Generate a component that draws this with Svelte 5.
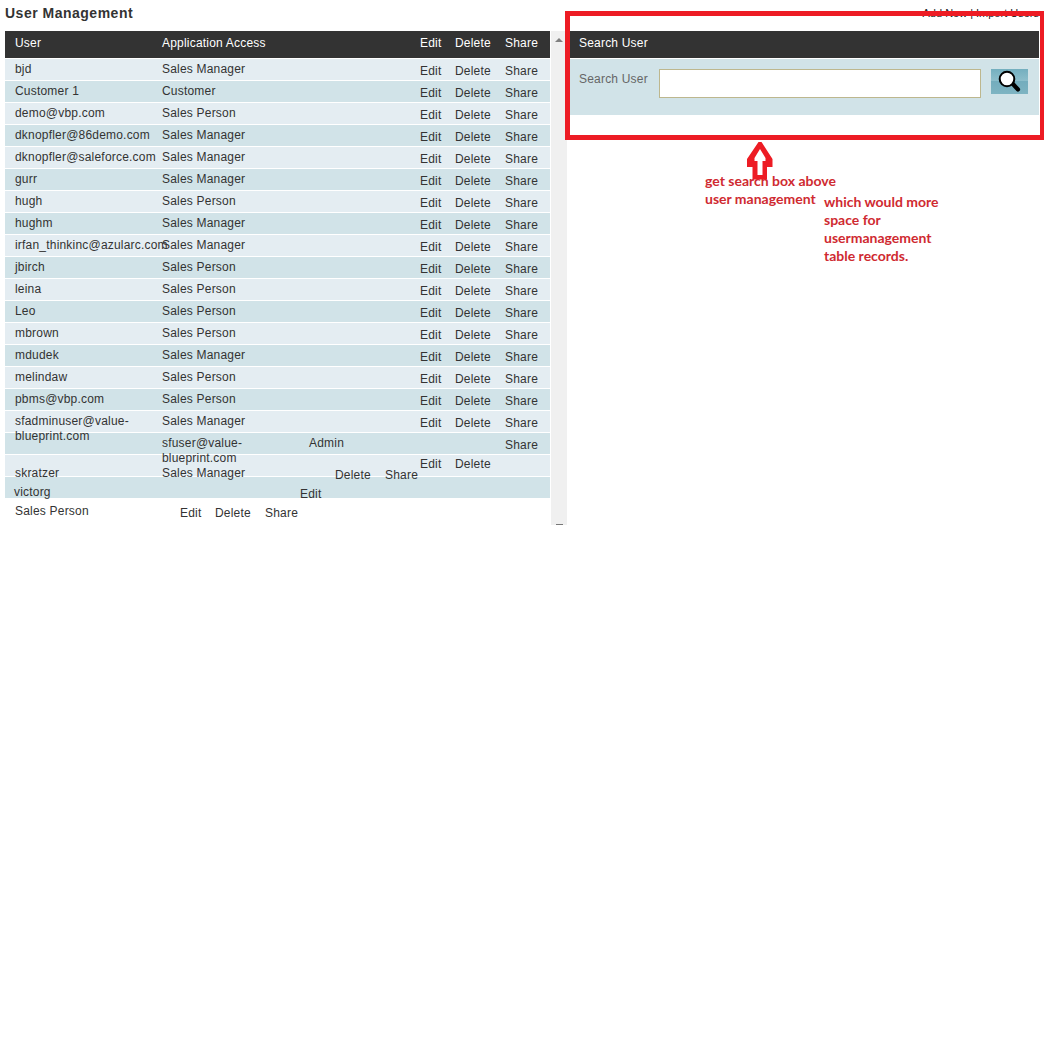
<script>
  const rows = [
    ['bjd', 'Sales Manager'],
    ['Customer 1', 'Customer'],
    ['demo@vbp.com', 'Sales Person'],
    ['dknopfler@86demo.com', 'Sales Manager'],
    ['dknopfler@saleforce.com', 'Sales Manager'],
    ['gurr', 'Sales Manager'],
    ['hugh', 'Sales Person'],
    ['hughm', 'Sales Manager'],
    ['irfan_thinkinc@azularc.com', 'Sales Manager'],
    ['jbirch', 'Sales Person'],
    ['leina', 'Sales Person'],
    ['Leo', 'Sales Person'],
    ['mbrown', 'Sales Person'],
    ['mdudek', 'Sales Manager'],
    ['melindaw', 'Sales Person'],
    ['pbms@vbp.com', 'Sales Person'],
    ['sfadminuser@value-\nblueprint.com', 'Sales Manager'],
  ];
  const actions = ['Edit', 'Delete', 'Share'];

  // Cells of the last records spill out of their rows and overlap the neighbours.
  const spilled = [
    { text: 'sfuser@value-\nblueprint.com', x: 157, y: 405 },
    { text: 'Admin', x: 304, y: 405 },
    { text: 'Share', x: 500, y: 407 },
    { text: 'Edit', x: 415, y: 426 },
    { text: 'Delete', x: 450, y: 426 },
    { text: 'skratzer', x: 10, y: 435 },
    { text: 'Sales Manager', x: 157, y: 435 },
    { text: 'Delete', x: 330, y: 437 },
    { text: 'Share', x: 380, y: 437 },
    { text: 'victorg', x: 9, y: 454 },
    { text: 'Edit', x: 295, y: 456 },
    { text: 'Sales Person', x: 10, y: 473 },
    { text: 'Edit', x: 175, y: 475 },
    { text: 'Delete', x: 210, y: 475 },
    { text: 'Share', x: 260, y: 475 },
  ];
</script>

<div class="page">
  <header>
    <h1>User Management</h1>
    <nav><span>Add New</span><span>|</span><span>Import Users</span></nav>
  </header>
  <main>
    <section class="users">
      <div class="row head">
        <span>User</span><span>Application Access</span>
        {#each actions as action}<span>{action}</span>{/each}
      </div>
      {#each rows as [user, access]}
        <div class="row">
          <span>{user}</span><span>{access}</span>
          {#each actions as action}<a href="#top" class="action">{action}</a>{/each}
        </div>
      {/each}
      <div class="row"></div>
      <div class="row"></div>
      <div class="row"></div>
      {#each spilled as cell}
        <span class="spill" style="left:{cell.x}px;top:{cell.y}px">{cell.text}</span>
      {/each}
    </section>
    <div class="scrollbar">
      <svg width="8" height="4" viewBox="0 0 8 4"><path d="M0 4 4 0 8 4z" fill="#808080" /></svg>
      <i></i>
    </div>
    <section class="search">
      <div class="bar">Search User</div>
      <div class="form">
        <label for="q">Search User</label>
        <input id="q" type="text" />
        <button aria-label="Search">
          <svg width="37" height="25" viewBox="0 0 37 25">
            <path d="M21.500 14.500 27 20.500" stroke="#000" stroke-width="4.200" stroke-linecap="round" />
            <circle cx="16" cy="10" r="7.300" fill="#fff" stroke="#000" stroke-width="2" />
          </svg>
        </button>
      </div>
    </section>
  </main>
  <div class="frame"></div>
  <p class="note first">get search box above<br />user management</p>
  <p class="note second">which would more<br />space for<br />usermanagement<br />table records.</p>
  <svg class="arrow" width="26" height="40" viewBox="0 0 26 40">
    <path d="M11.500 1H14.500L25.500 18V26H20V38.500H5.500V26H0V18Z" fill="#ed1c24" />
    <path d="M13 8 18.500 17V20H15.500V34H10.500V20H7.500V17Z" fill="#fff" />
  </svg>
</div>

<style>
  :global(body) { background: #fff; }
  .page {
    position: relative;
    width: 1044px;
    height: 1050px;
    overflow: hidden;
    font: 12px/15px "Liberation Sans", Arial, sans-serif;
    letter-spacing: 0.2px;
    color: #333;
  }
  header {
    display: flex;
    justify-content: space-between;
    height: 31px;
    padding: 0 5px;
    box-sizing: border-box;
  }
  h1 { margin: 5px 0 0; font-size: 14px; line-height: 16px; letter-spacing: 0.5px; }
  nav { display: flex; gap: 3px; padding-top: 6px; font-size: 11px; letter-spacing: 0; color: #222; }
  main { display: flex; padding-left: 5px; }
  .users { position: relative; width: 545px; margin-right: 1px; }
  .row {
    display: grid;
    grid-template-columns: 147px 258px 35px 50px 45px;
    height: 21px;
    margin-bottom: 1px;
    padding: 3px 0 0 10px;
    box-sizing: border-box;
    background: #d1e3e8;
    white-space: pre;
  }
  .row:nth-child(even) { background: #e4edf2; }
  .row.head { height: 27px; padding-top: 5px; background: #333; color: #fff; }
  .action { padding-top: 2px; color: inherit; text-decoration: none; }
  .spill { position: absolute; white-space: pre; }
  .scrollbar {
    display: flex;
    flex-direction: column;
    align-items: center;
    justify-content: space-between;
    width: 16px;
    height: 494px;
    padding-top: 7px;
    box-sizing: border-box;
    background: #f0f0f0;
  }
  .scrollbar svg { display: block; }
  .scrollbar i { width: 7px; height: 1px; background: #777; }
  .search { width: 470px; margin-left: 2px; }
  .bar { height: 27px; padding: 5px 10px; box-sizing: border-box; background: #333; color: #fff; }
  .form {
    display: flex;
    align-items: flex-start;
    height: 56px;
    margin-top: 1px;
    padding: 10px 11px 0 10px;
    box-sizing: border-box;
    background: #d1e3e8;
  }
  label { width: 80px; padding-top: 3px; color: #666; }
  input {
    width: 322px;
    height: 29px;
    margin: 0 10px 0 0;
    padding: 0 5px;
    box-sizing: border-box;
    border: 1px solid #bdb78e;
    background: #fff;
  }
  button {
    width: 37px;
    height: 25px;
    padding: 0;
    border: 0;
    background: linear-gradient(#74afbf 0, #8dbecb 48%, #74adbd 50%, #7eb4c2 100%);
  }
  button svg { display: block; }
  .frame {
    position: absolute;
    left: 565px;
    top: 11px;
    width: 479px;
    height: 129px;
    box-sizing: border-box;
    border: 5px solid #ed1c24;
    border-right-width: 4px;
  }
  .note {
    position: absolute;
    margin: 0;
    font: bold 14px/18px Lato, sans-serif;
    letter-spacing: 0;
    color: #cf2a31;
    white-space: nowrap;
  }
  .first { left: 705px; top: 172px; }
  .second { left: 824px; top: 193px; }
  .arrow { position: absolute; left: 747px; top: 141px; }
</style>
